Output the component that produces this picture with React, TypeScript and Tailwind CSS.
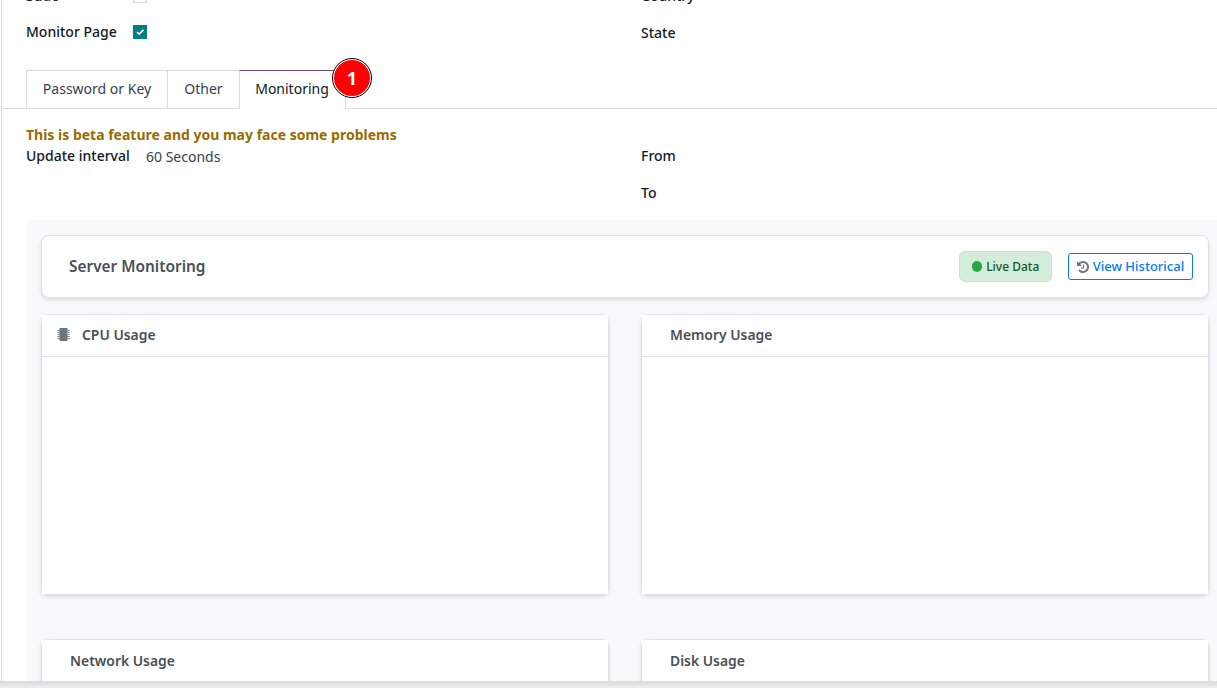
import type { ReactNode } from "react";

function Label({ children }: { children: ReactNode }) {
  return <span className="font-medium text-[#111827]">{children}</span>;
}

function ChipIcon() {
  return (
    <svg width="13" height="13" viewBox="0 0 13 13" fill="#6c757d" className="shrink-0">
      <rect x="2.5" y="0" width="8" height="13" />
      {[2, 4, 6, 8, 10].map((y) => (
        <path key={y} d={`M.5 ${y}h2v1h-2zM10.5 ${y}h2v1h-2z`} />
      ))}
    </svg>
  );
}

function HistoryIcon() {
  return (
    <svg width="12" height="12" viewBox="0 0 1536 1536" fill="#6c757d" className="shrink-0">
      <path d="M1536 768q0 156-61 298t-164 245-245 164-298 61q-172 0-327-72.5T177 1259q-7-10-6.500-22.500t8.500-20.500l137-138q10-9 25-9 16 2 23 12 73 95 179 147t225 52q104 0 198.500-40.500T1130 1130t109.500-163.500T1280 768t-40.500-198.500T1130 406 966.500 296.500 768 256q-98 0-188 35.500T420 393l137 138q31 30 14 69-17 40-59 40H64q-26 0-45-19T0 576V128q0-42 40-59 39-17 69 14l130 129Q346 111 483.500 55.500T768 0q156 0 298 61t245 164 164 245 61 298zM896 480v448q0 14-9 23t-23 9H544q-14 0-23-9t-9-23v-64q0-14 9-23t23-9h224V480q0-14 9-23t23-9h64q14 0 23 9t9 23z" />
    </svg>
  );
}

function ChartCard({ title, icon, raised = false }: { title: string; icon?: ReactNode; raised?: boolean }) {
  return (
    <section className="h-[281px] w-[568px] rounded-lg border border-[#dee2e6] bg-white shadow-[0_2px_4px_rgba(0,0,0,0.12)]">
      <h3 className={`flex h-[42px] items-center border-b border-[#dee2e6] bg-white pl-[15px] text-[13.9px] font-semibold text-[#495057] ${raised ? "pb-0.5" : ""}`}>
        <span className="flex w-[13px]">{icon}</span>
        <span className={icon ? "ml-3" : ""}>{title}</span>
      </h3>
      <div className="h-[237px] bg-white" />
    </section>
  );
}

export default function App() {
  return (
    <main className="relative h-[688px] w-[1217px] overflow-hidden bg-white pl-px font-['Noto_Sans',sans-serif] text-[14px] leading-[21px] text-[#374151]">
      <div className="h-[681px] overflow-hidden border-l border-[#d8dadd]">
        <div className="flex h-[70px] pl-6">
          <div className="-mt-[15px] w-[615px]">
            <div className="flex h-9">
              <div className="w-[107px]"><Label>Sudo</Label></div>
              <span className="mt-1 h-[14px] w-[14px] border border-[#d8dadd]" />
            </div>
            <div className="flex">
              <div className="w-[107px]"><Label>Monitor Page</Label></div>
              <span className="mt-1 flex h-[14px] w-[14px] items-center justify-center bg-[#017e84]">
                <svg width="14" height="14" viewBox="0 0 14 14" fill="none" stroke="white" strokeWidth="1.6">
                  <path d="M4 7l2.1 2.1 4.4-4.4" />
                </svg>
              </span>
            </div>
          </div>
          <div className="-mt-[15px]">
            <div className="h-[37px]"><Label>Country</Label></div>
            <Label>State</Label>
          </div>
        </div>

        <div className="flex h-[39px] border-b border-[#d8dadd] pl-6">
          <div className="flex h-[38px] w-[142px] items-center justify-center border border-b-0 border-[#d8dadd] pb-0.5">Password or Key</div>
          <div className="flex h-[38px] w-[71px] items-center justify-center border-t border-[#d8dadd] pb-0.5">Other</div>
          <div className="relative flex h-[39px] w-[107px] items-center justify-center border-x border-t border-x-[#d8dadd] border-t-[#714b67] bg-white pr-px pb-[3px] text-[#111827]">
            Monitoring
            <span className="absolute -top-[13px] left-[92px] flex h-[40px] w-[40px] items-center justify-center rounded-full border-[1.5px] border-black bg-white p-px">
              <span className="flex h-full w-full items-center justify-center rounded-full bg-[#ff0000] text-[18px] font-bold text-white">1</span>
            </span>
          </div>
        </div>

        <p className="mt-[15px] pl-6 font-bold text-[#9a6b01]">This is beta feature and you may face some problems</p>
        <div className="flex h-[75px] pl-6">
          <div className="flex w-[615px]">
            <div className="w-[120px]"><Label>Update interval</Label></div>
            <span className="mt-px">60 Seconds</span>
          </div>
          <div>
            <div className="h-[37px]"><Label>From</Label></div>
            <Label>To</Label>
          </div>
        </div>

        <div className="ml-6 h-[520px] w-[1198px] rounded-lg bg-[#f8f9fa] px-[15px] pt-[15px]">
          <header className="flex h-[63px] items-center justify-between rounded-lg border border-[#dee2e6] bg-white pr-[15px] pl-[27px] shadow-[0_2px_4px_rgba(0,0,0,0.1)]">
            <h2 className="text-[15.4px] font-semibold text-[#495057]">Server Monitoring</h2>
            <div className="flex items-center gap-4">
              <span className="flex h-[31px] w-[93px] items-center justify-center gap-1 rounded-md border border-[#c3e6cb] bg-[#d4edda] text-[12px] font-medium text-[#155724]">
                <span className="h-[10.5px] w-[10.5px] rounded-full bg-[#28a745]" />
                Live Data
              </span>
              <button className="flex h-[27px] w-[125px] items-center justify-center gap-1 rounded-[3px] border border-[#007bff] text-[13px] font-medium text-[#007bff]">
                <HistoryIcon />
                View Historical
              </button>
            </div>
          </header>
          <div className="mt-4 grid grid-cols-2 gap-x-8 gap-y-11">
            <ChartCard title="CPU Usage" icon={<ChipIcon />} raised />
            <ChartCard title="Memory Usage" raised />
            <ChartCard title="Network Usage" />
            <ChartCard title="Disk Usage" />
          </div>
        </div>
      </div>
      <div className="-ml-px h-[7px] bg-linear-to-b from-[#dadada] to-[#eeeeee]" />
    </main>
  );
}
